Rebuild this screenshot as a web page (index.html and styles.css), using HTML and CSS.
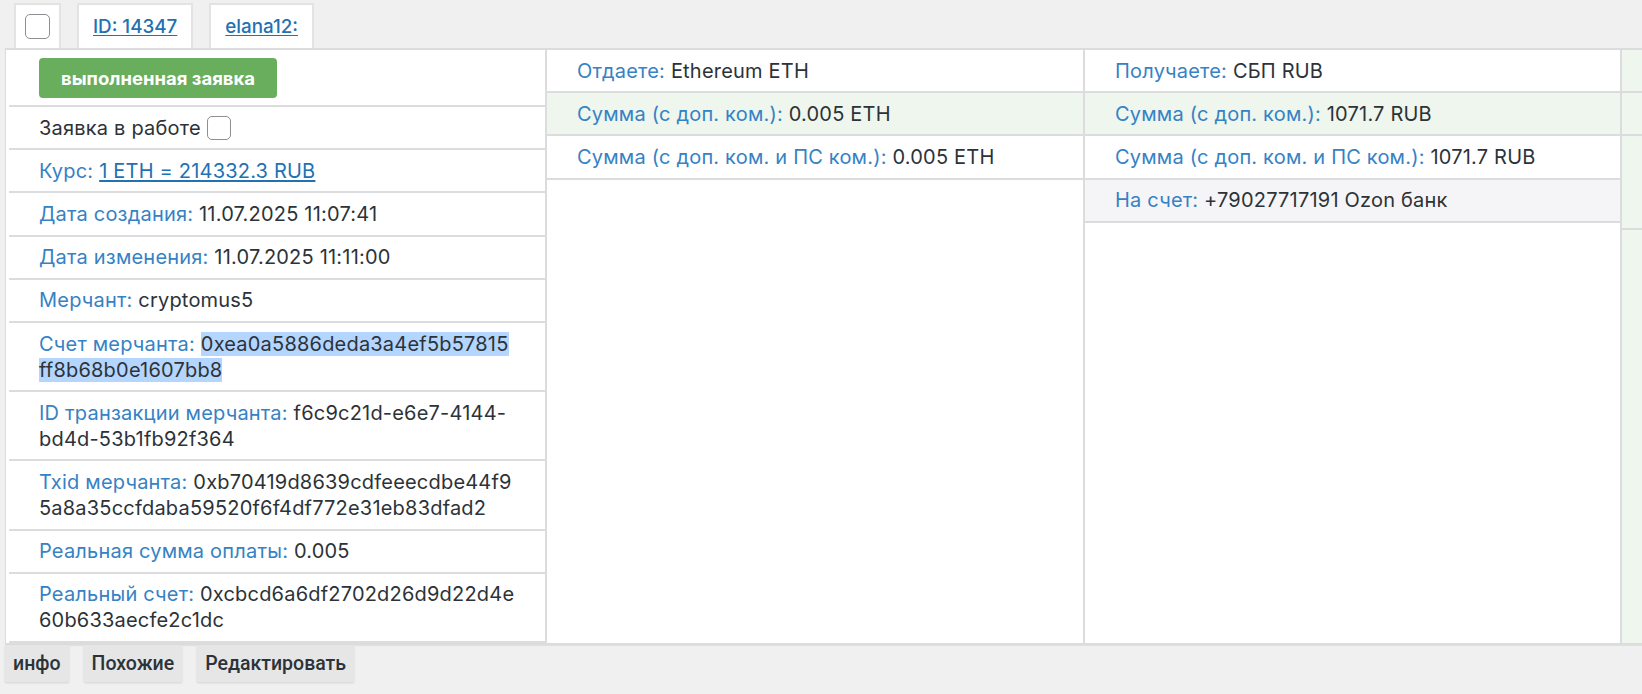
FILE: index.html
```html
<!DOCTYPE html>
<html lang="ru">
<head>
<meta charset="utf-8">
<title>Заявка 14347</title>
<link rel="stylesheet" href="styles.css">
</head>
<body>
<div class="tabs">
  <div class="tab tab-check"><span class="checkbox"></span></div>
  <div class="tab"><a class="tab-link" href="#">ID: 14347</a></div>
  <div class="tab"><a class="tab-link" href="#">elana12:</a></div>
</div>
<div class="panel">
  <div class="col col-first">
    <div class="row row-btn"><span class="btn-green">выполненная заявка</span></div>
    <div class="row dark">Заявка в работе <span class="checkbox inline"></span></div>
    <div class="row"><span class="lbl">Курс:</span> <a class="link" href="#">1 ETH = 214332.3 RUB</a></div>
    <div class="row"><span class="lbl">Дата создания:</span> 11.07.2025 11:07:41</div>
    <div class="row"><span class="lbl">Дата изменения:</span> 11.07.2025 11:11:00</div>
    <div class="row"><span class="lbl">Мерчант:</span> cryptomus5</div>
    <div class="row"><span class="lbl">Счет мерчанта:</span> <span class="sel">0xea0a5886deda3a4ef5b57815<wbr>ff8b68b0e1607bb8</span></div>
    <div class="row"><span class="lbl">ID транзакции мерчанта:</span> f6c9c21d-e6e7-4144-bd4d-53b1fb92f364</div>
    <div class="row"><span class="lbl">Txid мерчанта:</span> 0xb70419d8639cdfeeecdbe44f9<wbr>5a8a35ccfdaba59520f6f4df772e31eb83dfad2</div>
    <div class="row"><span class="lbl">Реальная сумма оплаты:</span> 0.005</div>
    <div class="row"><span class="lbl">Реальный счет:</span> 0xcbcd6a6df2702d26d9d22d4e<wbr>60b633aecfe2c1dc</div>
  </div>
  <div class="col col-mid">
    <div class="row"><span class="lbl">Отдаете:</span> Ethereum ETH</div>
    <div class="row green"><span class="lbl">Сумма (с доп. ком.):</span> 0.005 ETH</div>
    <div class="row"><span class="lbl">Сумма (с доп. ком. и ПС ком.):</span> 0.005 ETH</div>
  </div>
  <div class="col col-right">
    <div class="row"><span class="lbl">Получаете:</span> СБП RUB</div>
    <div class="row green"><span class="lbl">Сумма (с доп. ком.):</span> 1071.7 RUB</div>
    <div class="row"><span class="lbl">Сумма (с доп. ком. и ПС ком.):</span> 1071.7 RUB</div>
    <div class="row grey"><span class="lbl">На счет:</span> +79027717191 Ozon банк</div>
  </div>
  <div class="col col-extra">
    <div class="row">&nbsp;</div>
    <div class="row">&nbsp;</div>
    <div class="row row-tall">&nbsp;</div>
  </div>
</div>
<div class="actions">
  <span class="act">инфо</span>
  <span class="act">Похожие</span>
  <span class="act">Редактировать</span>
</div>
</body>
</html>
```

FILE: styles.css
```css
* { box-sizing: border-box; }
html, body { margin: 0; padding: 0; }
body {
  background: #f0f0f0;
  font-family: Inter, "Noto Sans", sans-serif;
  font-size: 20px;
  letter-spacing: 0.2px;
  color: #2c3338;
  width: 1642px;
  height: 694px;
  overflow: hidden;
}
.tabs {
  display: flex;
  gap: 16px;
  padding: 3px 0 0 14px;
  height: 48px;
}
.tab {
  background: #fff;
  border: 2px solid #e3e3e3;
  border-bottom: none;
  height: 45px;
  padding: 0 14px;
  display: flex;
  align-items: center;
}
.tab-check { padding: 0 9px; }
.tab-link {
  color: #2271b1;
  font-weight: 500;
  font-size: 18.8px;
  letter-spacing: 0;
  text-decoration: underline;
  text-underline-offset: 2px;
}
.checkbox {
  display: inline-block;
  width: 25px;
  height: 25px;
  border: 1.5px solid #8c8f94;
  border-radius: 5px;
  background: #fff;
}
.checkbox.inline {
  width: 24px;
  height: 24px;
  vertical-align: -5px;
}
.panel {
  display: flex;
  margin-left: 5px;
  background: #fff;
  border-top: 2px solid #dcdcde;
  border-bottom: 2px solid #dcdcde;
  border-left: 1px solid #dcdcde;
  box-shadow: 0 1px 1px rgba(0,0,0,0.06);
}
.col {
  flex: none;
  border-right: 2px solid #dcdcde;
}
.col-first { width: 541px; padding-left: 3px; }
.col-mid { width: 538px; }
.col-right { width: 537px; }
.col-extra { width: 537px; background: #eef6ee; border-right: none; }
.row {
  padding: 7.6px 24px 7.6px 30px;
  line-height: 26px;
  border-bottom: 2px solid #dcdcde;
  overflow-wrap: anywhere;
  color: #2c3338;
}
.row-btn { padding: 7.5px 30px; line-height: 40px; font-size: 0; }
.row-tall { height: 94px; }
.green { background: #eef6ee; }
.grey { background: #f5f5f7; }
.lbl { color: #3582c4; }
.link { color: #2271b1; text-decoration: underline; text-underline-offset: 2px; }
.sel { background: #b4d5fe; }
.btn-green {
  display: inline-block;
  height: 40px;
  padding: 0 22px;
  background: #68ae5d;
  border-radius: 4px;
  color: #fff;
  font-weight: 700;
  font-size: 18.5px;
  letter-spacing: 0;
  line-height: 40px;
  vertical-align: top;
}
.actions {
  display: flex;
  gap: 15px;
  padding-left: 5px;
}
.act {
  height: 37px;
  line-height: 37px;
  padding: 0 8px;
  background: #e6e6e6;
  box-shadow: 0 1px 2px rgba(0,0,0,0.12);
  font-family: Roboto, "Noto Sans", sans-serif;
  font-weight: 500;
  font-size: 19.5px;
  letter-spacing: 0;
  color: #2c3338;
}
```
